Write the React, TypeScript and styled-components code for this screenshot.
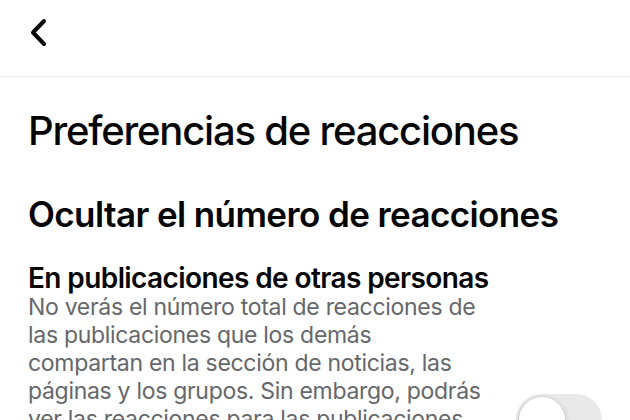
import React from 'react'
import styled, { createGlobalStyle } from 'styled-components'

const GlobalStyle = createGlobalStyle`
    html, body {
        margin: 0;
        padding: 0;
        background: #ffffff;
        overflow: hidden;
    }
    body {
        font-family: Inter, "Liberation Sans", sans-serif;
        -webkit-font-smoothing: antialiased;
    }
`

const Page = styled.div`
    width: 630px;
    height: 420px;
    overflow: hidden;
    background: #ffffff;
`

const Header = styled.header`
    height: 76px;
    display: flex;
    align-items: center;
    padding-left: 24px;
    border-bottom: 1px solid #ececec;
`

const BackButton = styled.button`
    width: 30px;
    height: 36px;
    margin-top: -10px;
    padding: 0;
    border: none;
    background: none;
    display: flex;
    align-items: center;
    justify-content: center;
`

const Content = styled.main`
    padding: 30px 28px 0 28px;
`

const Title = styled.h1`
    margin: 0;
    font-size: 40px;
    line-height: 48px;
    font-weight: 500;
    letter-spacing: -1.2px;
    color: #050505;
`

const SectionTitle = styled.h2`
    margin: 38px 0 0 0;
    font-size: 35px;
    line-height: 42px;
    font-weight: 600;
    letter-spacing: -0.6px;
    color: #050505;
`

const OptionRow = styled.div`
    display: flex;
    align-items: flex-start;
    margin-top: 28px;
`

const OptionText = styled.div`
    width: 476px;
`

const OptionLabel = styled.h3`
    margin: 0;
    font-size: 28px;
    line-height: 30px;
    font-weight: 600;
    letter-spacing: -0.6px;
    white-space: nowrap;
    color: #050505;
`

const OptionDescription = styled.p`
    margin: 0;
    font-size: 23px;
    line-height: 28px;
    font-weight: 400;
    letter-spacing: -0.3px;
    white-space: nowrap;
    color: #65676b;
`

const Switch = styled.div<{ on?: boolean }>`
    position: relative;
    flex: none;
    width: 86px;
    height: 52px;
    margin-left: 14px;
    margin-top: 131px;
    border-radius: 26px;
    background: ${({ on }) => (on ? '#34c759' : '#e9e9ea')};
`

const Knob = styled.div<{ on?: boolean }>`
    position: absolute;
    top: 3px;
    left: ${({ on }) => (on ? '37px' : '3px')};
    width: 46px;
    height: 46px;
    border-radius: 50%;
    background: #ffffff;
    box-shadow: 0 3px 8px rgba(0, 0, 0, 0.15), 0 0 0 1px rgba(0, 0, 0, 0.05);
`

function ChevronLeft() {
    return (
        <svg width="20" height="30" viewBox="0 0 20 30">
            <path
                d="M15 3 L4 14.5 L15 26"
                fill="none"
                stroke="#050505"
                strokeWidth="4"
                strokeLinecap="round"
                strokeLinejoin="round"
            />
        </svg>
    )
}

function App() {
    return (
        <>
            <GlobalStyle />
            <Page>
                <Header>
                    <BackButton aria-label="Atrás">
                        <ChevronLeft />
                    </BackButton>
                </Header>

                <Content>
                    <Title>Preferencias de reacciones</Title>
                    <SectionTitle>Ocultar el número de reacciones</SectionTitle>

                    <OptionRow>
                        <OptionText>
                            <OptionLabel>En publicaciones de otras personas</OptionLabel>
                            <OptionDescription>
                                No verás el número total de reacciones de
                                <br />
                                las publicaciones que los demás
                                <br />
                                compartan en la sección de noticias, las
                                <br />
                                páginas y los grupos. Sin embargo, podrás
                                <br />
                                ver las reacciones para las publicaciones
                                <br />
                                que compartes.
                            </OptionDescription>
                        </OptionText>
                        <Switch>
                            <Knob />
                        </Switch>
                    </OptionRow>
                </Content>
            </Page>
        </>
    )
}

export default App
